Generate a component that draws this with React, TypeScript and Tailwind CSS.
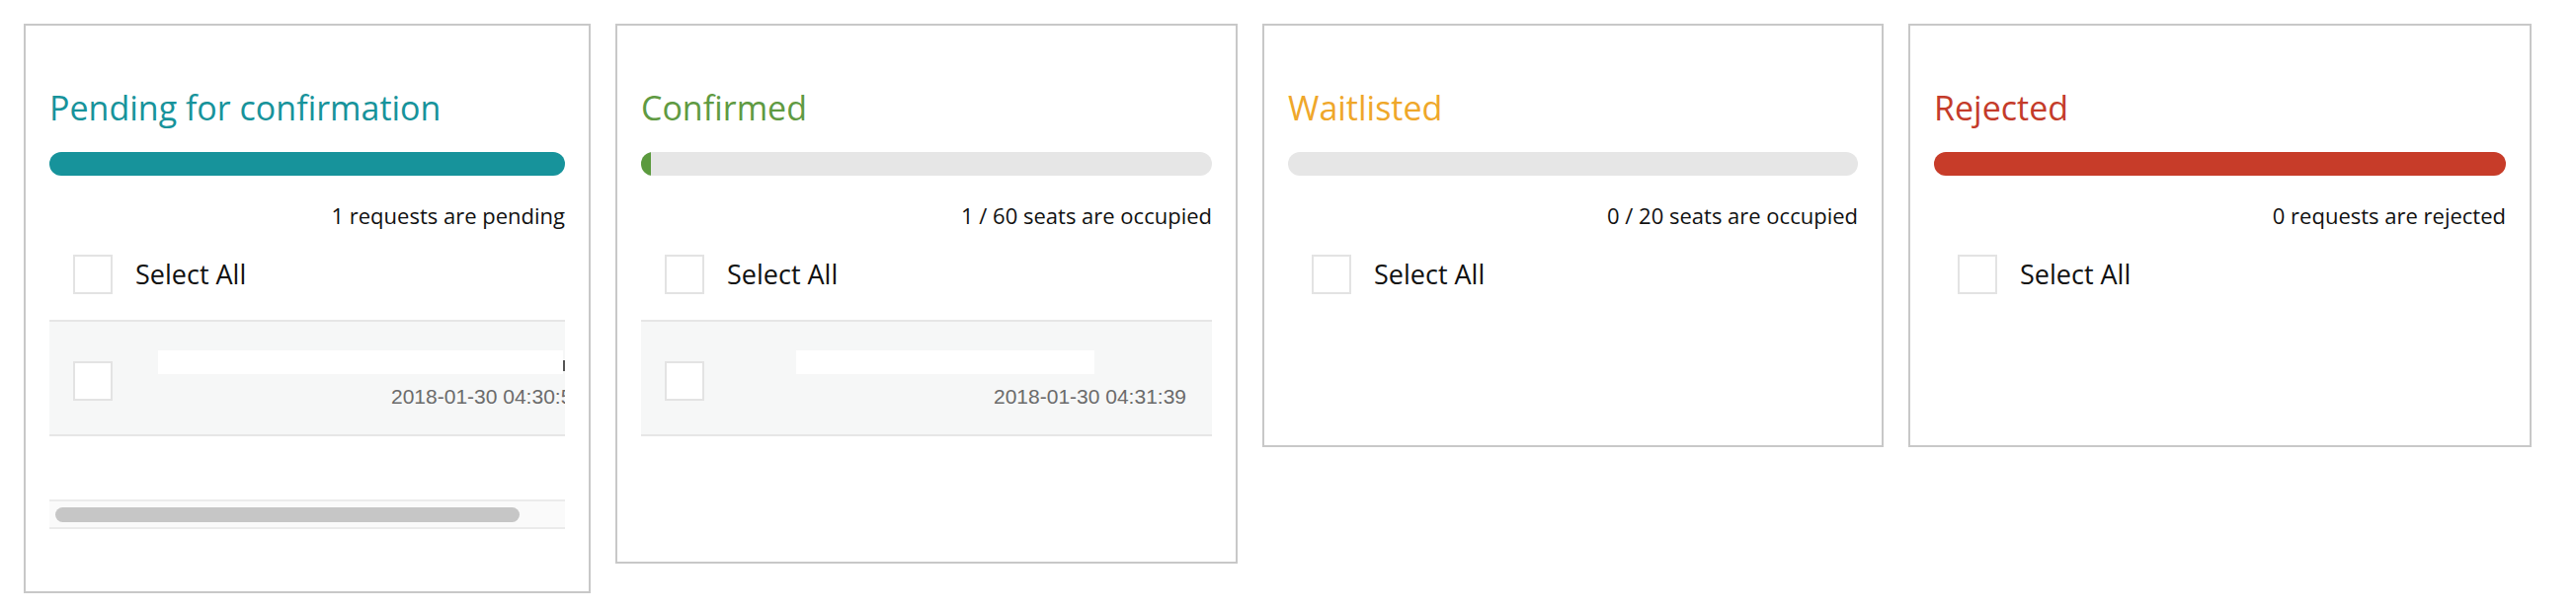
import React from "react";

type Row = {
  time: string;
  nameOffset: string;
  nameWidth: string;
  cutMark?: boolean;
};

type Column = {
  title: string;
  titleColor: string;
  barColor: string;
  fill: number;
  status: string;
  width: string;
  rows: Row[];
  overflow?: boolean;
};

const columns: Column[] = [
  {
    title: "Pending for confirmation",
    titleColor: "text-[#17939b]",
    barColor: "bg-[#17939b]",
    fill: 100,
    status: "1 requests are pending",
    width: "w-[574px]",
    overflow: true,
    rows: [
      {
        time: "2018-01-30 04:30:52",
        nameOffset: "ml-[46px]",
        nameWidth: "w-[410px]",
        cutMark: true,
      },
    ],
  },
  {
    title: "Confirmed",
    titleColor: "text-[#5f9a42]",
    barColor: "bg-[#5b9a3e]",
    fill: (1 / 60) * 100,
    status: "1 / 60 seats are occupied",
    width: "w-[630px]",
    rows: [
      {
        time: "2018-01-30 04:31:39",
        nameOffset: "ml-[93px]",
        nameWidth: "w-[302px]",
      },
    ],
  },
  {
    title: "Waitlisted",
    titleColor: "text-[#efa72a]",
    barColor: "bg-[#efa72a]",
    fill: 0,
    status: "0 / 20 seats are occupied",
    width: "w-[629px]",
    rows: [],
  },
  {
    title: "Rejected",
    titleColor: "text-[#c43b2a]",
    barColor: "bg-[#c73c29]",
    fill: 100,
    status: "0 requests are rejected",
    width: "w-[631px]",
    rows: [],
  },
];

const Checkbox = ({ className = "" }: { className?: string }) => (
  <div
    className={`w-[40px] h-[40px] shrink-0 border-2 border-[#e3e3e3] bg-white ${className}`}
  />
);

const RequestRow = ({ row, wide }: { row: Row; wide?: boolean }) => (
  <div
    className={`flex items-start border-y-2 border-[#e6e6e6] bg-[#f6f7f7] ${
      wide ? "w-[567px]" : "w-full"
    }`}
  >
    <Checkbox className="ml-[24px] mt-[40px]" />
    <div className="flex-1 pt-[29px] pb-[26px] pr-[26px]">
      <div className="flex items-start">
        <div className={`h-[24px] bg-white ${row.nameOffset} ${row.nameWidth}`} />
        {row.cutMark && <div className="w-[2px] h-[11px] mt-[10px] bg-[#555]" />}
      </div>
      <div className="mt-[11px] text-right font-['Liberation_Sans',Arial,sans-serif] text-[21px] leading-[24px] text-[#6b6b6b]">
        {row.time}
      </div>
    </div>
  </div>
);

const StatusCard = ({ col }: { col: Column }) => (
  <section
    className={`${col.width} shrink-0 border-2 border-[#c8c8c8] bg-white px-[24px] pt-[24px] pb-[63px]`}
  >
    <h2 className={`mt-[39px] text-[34px] leading-[40px] ${col.titleColor}`}>
      {col.title}
    </h2>

    <div className="mt-[25px] h-[24px] rounded-full bg-[#e6e6e6] overflow-hidden">
      <div className={`h-full ${col.barColor}`} style={{ width: `${col.fill}%` }} />
    </div>

    <p className="mt-[26px] text-right text-[22px] leading-[28px] text-[#111]">
      {col.status}
    </p>

    <div className="mt-[26px] flex items-center gap-[23px] pl-[24px] h-[40px]">
      <Checkbox />
      <span className="text-[27px] leading-[40px] text-[#111]">Select All</span>
    </div>

    <div className="mt-[26px] pb-[64px] overflow-hidden">
      {col.rows.map((row) => (
        <RequestRow key={row.time} row={row} wide={col.overflow} />
      ))}
    </div>

    {col.overflow && (
      <div className="h-[30px] border-y-2 border-[#ebebeb] bg-[#fafafa] flex items-center">
        <div className="ml-[6px] w-[470px] h-[15px] rounded-full bg-[#c6c6c6]" />
      </div>
    )}
  </section>
);

export default function App() {
  return (
    <div className="min-h-[618px] w-[2608px] bg-white font-['Open_Sans',sans-serif]">
      <div className="flex items-start gap-[25px] pl-[24px] pt-[24px]">
        {columns.map((col) => (
          <StatusCard key={col.title} col={col} />
        ))}
      </div>
    </div>
  );
}
